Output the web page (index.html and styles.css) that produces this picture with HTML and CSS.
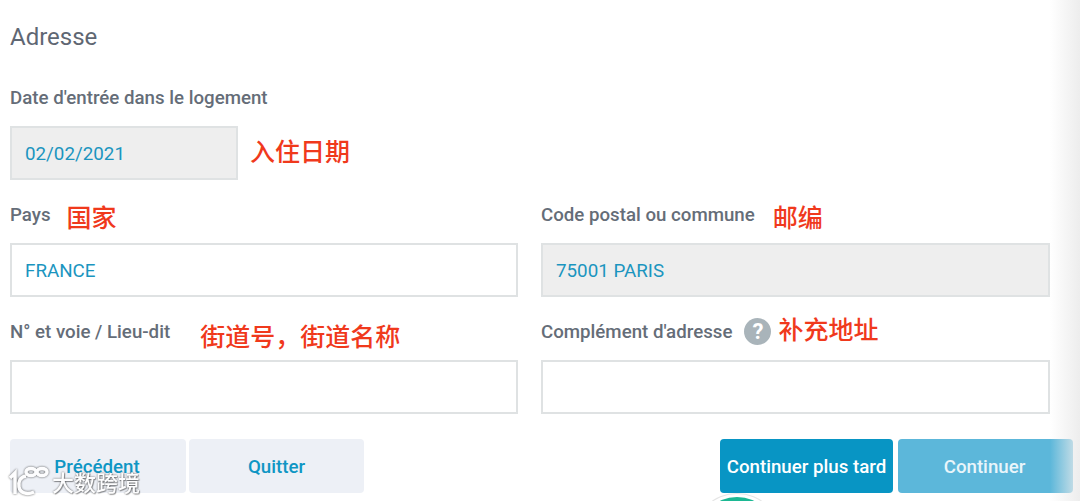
FILE: index.html
```html
<html lang="fr">

<head>
  <meta charset="UTF-8">
  <meta name="viewport" content="width=device-width, initial-scale=1.0">
  <title>Adresse</title>
  <link rel="stylesheet" href="styles.css">
</head>

<body>
  <div class="page">
    <h1>Adresse</h1>

    <div class="field date-field">
      <label>Date d'entrée dans le logement</label>
      <div class="input-row">
        <input class="date-input" type="text" value="02/02/2021" disabled>
        <span class="note note-date">入住日期</span>
      </div>
    </div>

    <div class="form-grid">
      <div class="field">
        <div class="label-row">
          <label>Pays</label>
          <span class="note note-pays">国家</span>
        </div>
        <input type="text" value="FRANCE">
      </div>
      <div class="field">
        <div class="label-row">
          <label>Code postal ou commune</label>
          <span class="note note-code">邮编</span>
        </div>
        <input type="text" value="75001 PARIS" disabled>
      </div>
      <div class="field">
        <div class="label-row">
          <label>N° et voie / Lieu-dit</label>
          <span class="note note-voie">街道号，街道名称</span>
        </div>
        <input type="text">
      </div>
      <div class="field">
        <div class="label-row">
          <label>Complément d'adresse</label>
          <span class="help">?</span>
          <span class="note note-comp">补充地址</span>
        </div>
        <input type="text">
      </div>
    </div>

    <div class="actions">
      <div class="actions-group">
        <button class="btn-light btn-prev">Précédent</button>
        <button class="btn-light btn-quit">Quitter</button>
      </div>
      <div class="actions-group">
        <button class="btn-later">Continuer plus tard</button>
        <button class="btn-next">Continuer</button>
      </div>
    </div>
  </div>

  <!-- bord du panneau, bulle et filigrane par-dessus la page -->
  <div class="edge-shadow"></div>
  <div class="chat-bubble"></div>
  <div class="watermark">
    <svg class="watermark-logo" width="40" height="32" viewBox="0 0 40 32">
      <path d="M1 13 L6 8 V29" />
      <path d="M17 11 C11 12 9 17 10 22 C11 28 18 30 25 27" />
      <ellipse cx="22" cy="7" rx="5" ry="3.5" />
      <ellipse cx="33" cy="7" rx="5" ry="3.5" />
    </svg>
    <span>大数跨境</span>
  </div>
</body>

</html>
```

FILE: styles.css
```css
html, body {
  height: 100%;
}

body {
  font-family: Roboto, "Liberation Sans", "Noto Sans CJK SC", sans-serif;
  background-color: #ffffff;
  margin: 0;
  padding: 0;
  overflow: hidden;
}

.page {
  width: 1063px;
  padding: 0 0 0 10px;
}

h1 {
  margin: 0;
  padding-top: 22px;
  height: 49px;
  font-size: 24px;
  line-height: 30px;
  font-weight: 400;
  color: #5f6773;
}

label {
  display: block;
  font-size: 18.7px;
  line-height: 20px;
  font-weight: 500;
  white-space: nowrap;
  color: #656d78;
}

.date-field {
  margin-top: 17px;
}

.date-field label {
  margin-bottom: 18px;
}

.input-row {
  display: flex;
  align-items: center;
}

input {
  display: block;
  box-sizing: border-box;
  width: 100%;
  height: 54px;
  padding: 2px 13px 0;
  border: 2px solid #dfe2e3;
  background: #ffffff;
  font-family: inherit;
  font-size: 18.8px;
  color: #1b95bf;
  border-radius: 0;
  outline: none;
}

input:disabled {
  background: #eeeeee;
  color: #1b95bf;
  -webkit-text-fill-color: #1b95bf;
  opacity: 1;
}

.date-input {
  width: 228px;
}

.note {
  font-family: "Noto Sans CJK SC", sans-serif;
  font-size: 25px;
  line-height: 30px;
  font-weight: 500;
  white-space: nowrap;
  color: #f0391c;
}

.note-date {
  margin-left: 12px;
  margin-top: -6px;
}

.form-grid {
  display: grid;
  grid-template-columns: 508px 509px;
  column-gap: 23px;
  row-gap: 21px;
  margin-top: 21px;
}

.label-row {
  display: flex;
  align-items: flex-start;
  height: 42px;
}

.label-row label {
  margin-top: 4px;
}

.note-pays {
  margin-left: 16px;
}

.note-code {
  margin-left: 18px;
}

.note-voie {
  margin-left: 30px;
  margin-top: 2px;
}

.note-comp {
  margin-left: 7px;
  margin-top: -5px;
}

.help {
  width: 27px;
  height: 27px;
  margin-left: 12px;
  border-radius: 50%;
  background: #a9b4ba;
  color: #ffffff;
  font-size: 22px;
  font-weight: 700;
  line-height: 27px;
  text-align: center;
}

.actions {
  display: flex;
  justify-content: space-between;
  margin-top: 25px;
}

.actions-group {
  display: flex;
  gap: 3px;
}

button {
  height: 54px;
  padding: 2px 0 0;
  border: none;
  border-radius: 4px;
  font-family: inherit;
  font-size: 18.7px;
  font-weight: 500;
  cursor: pointer;
}

.btn-light {
  width: 175px;
  background-color: #edf0f6;
  color: #0f96c4;
}

.btn-prev {
  width: 176px;
  padding-right: 2px;
}

.btn-later {
  width: 173px;
  margin-right: 2px;
  background-color: #0895c4;
  color: #ffffff;
}

.btn-next {
  width: 175px;
  padding-right: 2px;
  background-color: #5cb7da;
  color: #e9f5fa;
}

.edge-shadow {
  position: absolute;
  top: 0;
  right: 0;
  width: 30px;
  height: 100%;
  background: linear-gradient(to right, rgba(235, 235, 235, 0), rgba(235, 235, 235, 0.9));
  pointer-events: none;
}

.chat-bubble {
  position: absolute;
  left: 697px;
  top: 497px;
  width: 80px;
  height: 80px;
  border-radius: 50%;
  background: #1cb893;
  box-shadow: 0 0 0 3px #ffffff, 0 0 0 4px rgba(0, 0, 0, 0.1);
}

.watermark {
  position: absolute;
  left: 9px;
  top: 465px;
  display: flex;
  align-items: center;
  color: #ffffff;
  font-family: "Noto Sans CJK SC", sans-serif;
  font-size: 22px;
  font-weight: 500;
  line-height: 32px;
  opacity: 0.92;
  text-shadow: 0 0 2px rgba(0, 0, 0, 0.7), 1px 1px 1px rgba(0, 0, 0, 0.35);
}

.watermark-logo {
  margin-right: 3px;
  fill: none;
  stroke: #ffffff;
  stroke-width: 3.5;
  filter: drop-shadow(0 0 1px rgba(0, 0, 0, 0.7));
}
```
